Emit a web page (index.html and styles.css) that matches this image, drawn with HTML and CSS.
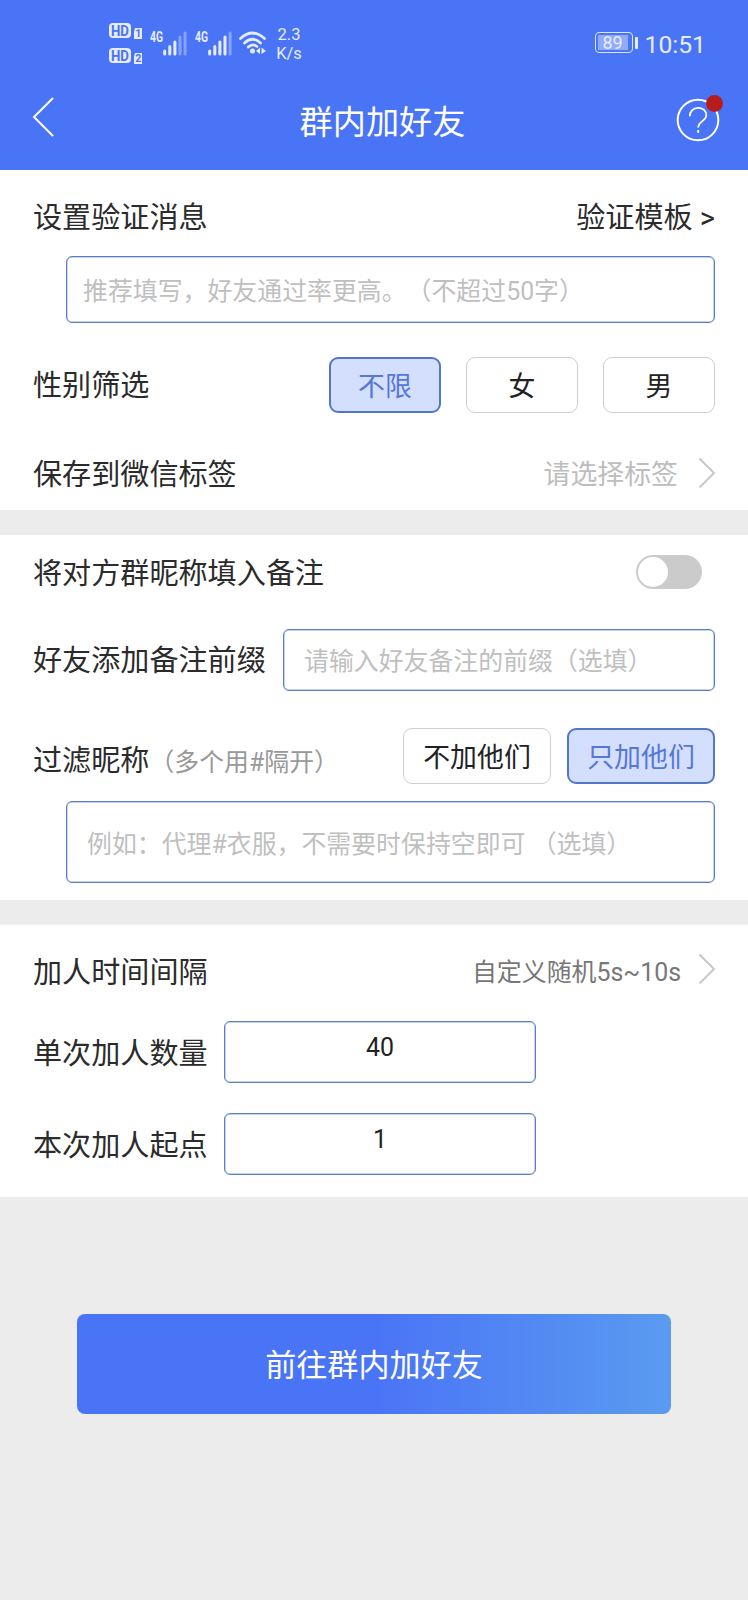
FILE: index.html
```html
<!DOCTYPE html>
<html lang="zh-CN">
<head>
  <meta charset="utf-8">
  <title>群内加好友</title>
  <meta name="viewport" content="width=device-width, initial-scale=1.0">
  <link rel="stylesheet" href="styles.css">
</head>
<body>
  <header class="header">
    <div class="status">
      <div class="status-left">
        <svg class="hd" width="34" height="42" viewBox="0 0 34 42">
          <rect x="0" y="1" width="22" height="15" rx="4"/>
          <path d="M26 6h7v11h-8V10z"/>
          <rect x="0" y="26" width="22" height="15" rx="4"/>
          <path d="M26 31h7v11h-8V35z"/>
          <text class="cut" x="2" y="13.5" textLength="18" lengthAdjust="spacingAndGlyphs">HD</text>
          <text class="cut" x="2" y="38.5" textLength="18" lengthAdjust="spacingAndGlyphs">HD</text>
          <text class="cut small" x="26.2" y="15.4">1</text>
          <text class="cut small" x="26.2" y="40.4">2</text>
        </svg>
        <svg class="signal" width="38" height="26" viewBox="0 0 38 26">
          <text x="0" y="12" textLength="13" lengthAdjust="spacingAndGlyphs">4G</text>
          <path d="M14.7 21V24M19.8 16.5V24M24.9 12V24"/>
          <path class="dim" d="M30 7V24M35.1 3V24"/>
        </svg>
        <svg class="signal second" width="38" height="26" viewBox="0 0 38 26">
          <text x="0" y="12" textLength="13" lengthAdjust="spacingAndGlyphs">4G</text>
          <path d="M14.7 21V24M19.8 16.5V24M24.9 12V24M30 7V24"/>
          <path class="dim" d="M35.1 3V24"/>
        </svg>
        <svg class="wifi" width="28" height="24" viewBox="0 0 28 24">
          <path d="M1.5 7.5Q13.5-3.5 25.5 7.500M5.500 12Q13.500 4.500 21.500 12M9.300 16Q13.500 12 18 15.500"/>
          <circle cx="13.500" cy="20" r="2.500"/>
          <path class="arrows" d="M21 16.500V23l-4-3zM22.500 16.500V23l4.500-3z"/>
        </svg>
        <div class="speed"><span>2.3</span><span>K/s</span></div>
      </div>
      <div class="status-right">
        <div class="battery"><span>89</span></div>
        <i class="nub"></i>
        <span class="time">10:51</span>
      </div>
    </div>
    <div class="nav">
      <svg class="back" width="24" height="42" viewBox="0 0 24 42"><path d="M21 2L2 21L21 40"/></svg>
      <h1>群内加好友</h1>
      <div class="help">
        <svg width="44" height="44" viewBox="0 0 44 44">
          <circle cx="22" cy="22" r="20.300"/>
          <path d="M13.800 18.300C13.800 13 17.500 9.800 22.200 9.800S30.300 13 30.300 17.300C30.300 22.800 22.200 23.500 22.200 29.500M22.200 32v3"/>
        </svg>
        <i class="dot"></i>
      </div>
    </div>
  </header>

  <section class="card verify">
    <div class="row">
      <span class="label">设置验证消息</span>
      <a href="#" class="template">验证模板 &gt;</a>
    </div>
    <div class="field message">推荐填写，好友通过率更高。（不超过50字）</div>
    <div class="row gender">
      <span class="label">性别筛选</span>
      <div class="options">
        <span class="option active">不限</span>
        <span class="option">女</span>
        <span class="option">男</span>
      </div>
    </div>
    <div class="row tag">
      <span class="label">保存到微信标签</span>
      <span class="value">请选择标签</span>
      <svg class="arrow" width="18" height="32" viewBox="0 0 18 32"><path d="M1.500 1.500L16 16L1.500 30.500"/></svg>
    </div>
  </section>

  <section class="card remark">
    <div class="row">
      <span class="label">将对方群昵称填入备注</span>
      <span class="switch"></span>
    </div>
    <div class="row prefix">
      <span class="label">好友添加备注前缀</span>
      <div class="field">请输入好友备注的前缀（选填）</div>
    </div>
    <div class="row filter">
      <span class="label">过滤昵称<small>（多个用#隔开）</small></span>
      <div class="options wide">
        <span class="option">不加他们</span>
        <span class="option active">只加他们</span>
      </div>
    </div>
    <div class="field names">例如：代理#衣服，不需要时保持空即可 （选填）</div>
  </section>

  <section class="card amount">
    <div class="row interval">
      <span class="label">加人时间间隔</span>
      <span class="value dark">自定义随机5s~10s</span>
      <svg class="arrow" width="18" height="32" viewBox="0 0 18 32"><path d="M1.500 1.500L16 16L1.500 30.500"/></svg>
    </div>
    <div class="row count">
      <span class="label">单次加人数量</span>
      <div class="field number">40</div>
    </div>
    <div class="row start">
      <span class="label">本次加人起点</span>
      <div class="field number">1</div>
    </div>
  </section>

  <a href="#" class="submit">前往群内加好友</a>
</body>
</html>
```

FILE: styles.css
```css
* {
  margin: 0;
  padding: 0;
  box-sizing: border-box;
}

body {
  background: #ececec;
  color: #2b2b2b;
  font-family: Roboto, "Noto Sans CJK SC", sans-serif;
  font-size: 29.1px;
  line-height: 1.2;
  min-height: 1600px;
  text-spacing-trim: space-all;
}

a {
  color: inherit;
  text-decoration: none;
}

svg {
  display: block;
  flex: none;
}

/* header */
.header {
  height: 170px;
  background: #4a74f6;
  color: #fff;
}

.status {
  height: 85px;
  display: flex;
  justify-content: space-between;
  padding: 0 42px 0 109px;
  color: #e6ecff;
}

.status-left,
.status-right {
  display: flex;
  align-items: center;
}

.hd {
  fill: #e6ecff;
}

.hd .cut {
  fill: #4a74f6;
  font-size: 15.5px;
  font-weight: 700;
}

.hd .small {
  font-size: 10.5px;
}

.signal {
  margin-left: 7px;
  fill: none;
  stroke: #e6ecff;
  stroke-width: 3;
  stroke-linecap: round;
}

.signal text {
  fill: #e6ecff;
  stroke: none;
  font-size: 14.5px;
  font-weight: 700;
}

.signal .dim {
  stroke: #86a2f9;
}

.wifi {
  margin-left: 6px;
  fill: none;
  stroke: #e6ecff;
  stroke-width: 2.7;
  stroke-linecap: round;
}

.wifi circle,
.wifi .arrows {
  fill: #e6ecff;
  stroke: none;
}

.speed {
  margin: 2px 0 0 8px;
  width: 28px;
  display: flex;
  flex-direction: column;
  align-items: center;
  font-size: 16.5px;
  line-height: 19px;
}

.battery {
  width: 38px;
  height: 21px;
  padding: 2px 4px 2px 2px;
  border: 1.5px solid #dbe4ff;
  border-radius: 4px;
  font-size: 18px;
}

.battery span {
  display: block;
  height: 15px;
  line-height: 16px;
  text-align: center;
  background: #91aafa;
}

.nub {
  width: 3px;
  height: 12px;
  margin: 0 7px 0 2px;
  border-radius: 1px;
  background: #e6ecff;
}

.time {
  font-size: 24.7px;
  line-height: 30px;
  margin-top: 4px;
}

.nav {
  height: 70px;
  display: flex;
  align-items: center;
  justify-content: space-between;
  padding: 0 28px 0 32px;
}

.back {
  margin-top: -6px;
  fill: none;
  stroke: #fff;
  stroke-width: 2;
}

.nav h1 {
  padding: 5px 0 0 33px;
  font-size: 33.2px;
  font-weight: 400;
}

.help {
  position: relative;
}

.help svg {
  fill: none;
  stroke: #fff;
  stroke-width: 2;
}

.help path {
  stroke-width: 1.8;
}

.dot {
  position: absolute;
  top: -3px;
  right: -3px;
  width: 17px;
  height: 17px;
  border-radius: 50%;
  background: #b71c1c;
}

/* cards */
.card {
  background: #fff;
  padding: 0 33px;
  margin-bottom: 25px;
}

.row {
  display: flex;
  align-items: center;
}

.label {
  flex: 1;
  padding-top: 3px;
  white-space: nowrap;
}

.template {
  padding-top: 2px;
}

.field {
  display: flex;
  align-items: center;
  padding-top: 4px;
  border: 1px solid #5a7fc6;
  box-shadow: inset 0 0 0 .5px #8ba6da;
  border-radius: 6px;
  color: #bfbfbf;
  font-size: 24.9px;
  white-space: nowrap;
}

.options {
  display: flex;
  gap: 25px;
}

.option {
  width: 112px;
  height: 56px;
  padding-top: 4px;
  display: flex;
  align-items: center;
  justify-content: center;
  border: 1px solid #cfcfcf;
  border-radius: 9px;
  color: #222;
  font-size: 26.9px;
}

.option.active {
  border: 2px solid #5277c8;
  background: #d4dffe;
  color: #5577d6;
}

.wide {
  gap: 16px;
}

.wide .option {
  width: 148px;
}

.value {
  padding-top: 2px;
  color: #bdbdbd;
  font-size: 26.9px;
}

.value.dark {
  color: #777;
  font-size: 24.9px;
}

.arrow {
  margin: -2px -1px 0 20px;
  fill: none;
  stroke: #c8c8c8;
  stroke-width: 2;
}

/* verify message, gender, tag */
.verify {
  height: 340px;
  padding-top: 20px;
}

.verify .row:first-child {
  height: 54px;
}

.message {
  height: 67px;
  margin: 12px 0 0 33px;
  padding-left: 16px;
}

.gender {
  margin-top: 34px;
}

.tag {
  height: 60px;
  margin-top: 31px;
}

.tag .label {
  padding-top: 2px;
}

/* remark */
.remark {
  height: 365px;
  padding-top: 12px;
}

.remark .row:first-child {
  height: 50px;
}

.remark .row:first-child .label {
  padding-top: 5px;
}

.switch {
  width: 66px;
  height: 34px;
  margin-right: 13px;
  padding: 2px;
  border-radius: 17px;
  background: #cbcbcb;
}

.switch::before {
  content: "";
  display: block;
  width: 30px;
  height: 30px;
  border-radius: 50%;
  background: #fff;
}

.prefix {
  height: 62px;
  margin-top: 32px;
}

.prefix .field {
  width: 432px;
  height: 62px;
  padding-left: 20px;
}

.filter {
  height: 56px;
  margin-top: 37px;
}

.filter .label {
  padding-top: 10px;
}

.filter small {
  color: #999;
  font-size: 24.9px;
}

.names {
  height: 82px;
  margin: 17px 0 0 33px;
  padding: 6px 0 0 20px;
}

/* interval and amounts */
.amount {
  height: 272px;
  padding-top: 17px;
  margin-bottom: 117px;
}

.interval {
  height: 60px;
}

.interval .value {
  margin-right: -3px;
}

.interval .arrow {
  margin-top: -6px;
}

.count {
  margin-top: 19px;
}

.start {
  margin-top: 30px;
}

.count .label,
.start .label {
  flex: none;
  width: 191px;
  padding-top: 4px;
}

.number {
  width: 312px;
  height: 62px;
  padding: 0 0 9px;
  justify-content: center;
  color: #222;
}

.submit {
  display: flex;
  align-items: center;
  justify-content: center;
  width: 594px;
  height: 100px;
  margin: 0 auto;
  padding-top: 4px;
  border-radius: 8px;
  background: linear-gradient(90deg, #4a74f6 50%, #5a9bf0);
  color: #fff;
  font-size: 31.1px;
}
```
